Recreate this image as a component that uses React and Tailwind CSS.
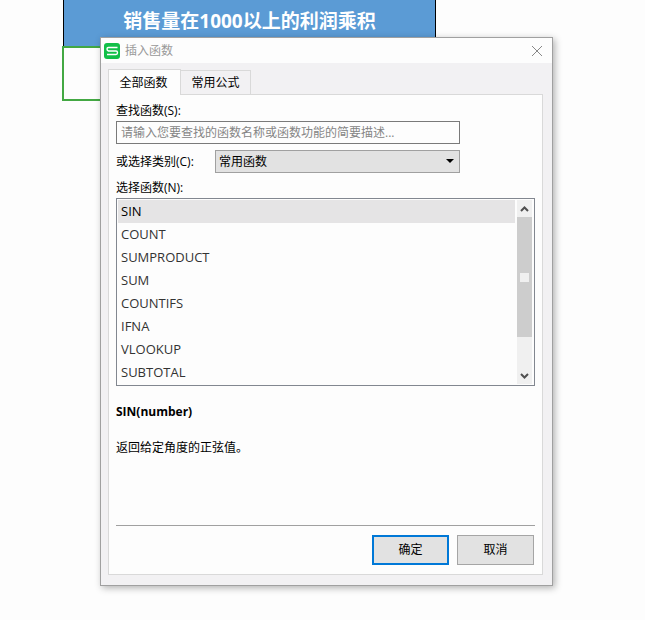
import { useState } from "react";

const functions = ["SIN", "COUNT", "SUMPRODUCT", "SUM", "COUNTIFS", "IFNA", "VLOOKUP", "SUBTOTAL"];

function Sheet() {
  return (
    <div className="ml-[62px] w-[375px]">
      <div className="ml-px flex h-[46px] w-[373px] justify-center border-x border-black bg-[#5b9bd5] pt-1.5 text-[19px] leading-[30px] font-bold text-white">
        销售量在1000以上的利润乘积
      </div>
      <div className="h-[55px] border-2 border-[#43a843]" />
    </div>
  );
}

function TitleBar() {
  return (
    <header className="flex h-[25px] items-center bg-[#fdfdfd] pr-2.5 pl-[3px]">
      <svg viewBox="0 0 16 16" className="size-4" aria-hidden="true">
        <rect width="16" height="16" rx="3" fill="#12bf48" />
        <path d="M13.500 4.500H4.500Q3 4.500 3 6T4.500 8h7.500q1.500 0 1.500 1.750T12 11.500H3" fill="none" stroke="#fff" strokeWidth="1.400" />
      </svg>
      <h1 className="ml-[5px] flex-1 text-[#999]">插入函数</h1>
      <button type="button" aria-label="关闭">
        <svg viewBox="0 0 10 10" className="size-2.5" fill="none" stroke="#888" aria-hidden="true">
          <path d="M0 0l10 10M10 0L0 10" />
        </svg>
      </button>
    </header>
  );
}

function ScrollBar() {
  return (
    <div className="flex w-[15px] flex-col bg-[#f0f0f0]">
      <svg viewBox="0 0 15 17" className="h-[17px]" fill="none" stroke="#505050" strokeWidth="2" aria-hidden="true">
        <path d="M4 11l3.500-3.500L11 11" />
      </svg>
      <div className="flex h-[120px] items-center justify-center bg-[#cdcdcd]">
        <div className="size-[9px] bg-[#f0f0f0]" />
      </div>
      <svg viewBox="0 0 15 17" className="mt-auto h-[17px]" fill="none" stroke="#505050" strokeWidth="2" aria-hidden="true">
        <path d="M4 7l3.500 3.500L11 7" />
      </svg>
    </div>
  );
}

function Dialog() {
  const [selected, setSelected] = useState("SIN");
  return (
    <section
      role="dialog"
      aria-label="插入函数"
      className="absolute top-[37px] left-[100px] w-[453px] border border-[#a0a0a0] bg-[#f2f1f3] text-xs leading-4 text-black shadow-[2px_2px_7px_rgba(0,0,0,0.3)]"
    >
      <TitleBar />
      <div className="pt-1.5 pr-[9px] pb-2.5 pl-[7px]">
        <div role="tablist" className="flex items-end">
          <button type="button" role="tab" aria-selected="true" className="relative -mb-px h-[26px] w-[73px] border border-b-0 border-[#d9d9d9] bg-[#fdfdfd] pr-0.5">
            全部函数
          </button>
          <button type="button" role="tab" aria-selected="false" className="h-6 w-[70px] border border-b-0 border-l-0 border-[#d9d9d9]">
            常用公式
          </button>
        </div>
        <div className="border border-[#d9d9d9] bg-[#fdfdfd] px-[7px] pt-2 pb-[9px]">
          <label htmlFor="search" className="block">查找函数(S):</label>
          <input
            id="search"
            placeholder="请输入您要查找的函数名称或函数功能的简要描述..."
            className="mt-0.5 block h-[23px] w-[344px] border border-[#7a7a7a] px-1 outline-none placeholder:text-[#858585]"
          />
          <div className="mt-1.5 flex h-[23px] w-[344px] items-center">
            <label htmlFor="category" className="w-[99px]">或选择类别(C):</label>
            <div className="relative h-full flex-1">
              <select id="category" className="h-full w-full appearance-none border border-[#a0a0a0] bg-[#e2e2e2] px-[3px]">
                <option>常用函数</option>
              </select>
              <svg viewBox="0 0 8 4" className="pointer-events-none absolute top-[9px] right-1.5 h-1 w-2" aria-hidden="true">
                <path d="M0 0h8L4 4z" />
              </svg>
            </div>
          </div>
          <h2 id="list-label" className="mt-[7px]">选择函数(N):</h2>
          <div className="mt-0.5 flex h-[188px] border border-[#828790] p-px pr-0.5">
            <ul role="listbox" aria-labelledby="list-label" className="mr-0.5 flex-1 text-[13px] leading-[23px] text-[#333]">
              {functions.map((name) => (
                <li
                  key={name}
                  role="option"
                  aria-selected={name === selected}
                  onClick={() => setSelected(name)}
                  className="h-[23px] px-[3px] aria-selected:bg-[#e5e4e5] aria-selected:text-black"
                >
                  {name}
                </li>
              ))}
            </ul>
            <ScrollBar />
          </div>
          <div className="h-[140px] border-b border-[#a0a0a0] pt-[18px]">
            <h3 className="font-bold">SIN(number)</h3>
            <p className="mt-5">返回给定角度的正弦值。</p>
          </div>
          <div className="mt-[9px] flex justify-end gap-2 pr-px">
            <button type="button" className="h-[30px] w-[77px] border-2 border-[#0078d7] bg-[#e2e2e2]">确定</button>
            <button type="button" className="h-[30px] w-[77px] border border-[#a5a5a5] bg-[#e2e2e2]">取消</button>
          </div>
        </div>
      </div>
    </section>
  );
}

export default function App() {
  return (
    <main className="relative min-h-screen bg-[#fdfdfd] font-['Open_Sans','Noto_Sans_CJK_SC',sans-serif]">
      <Sheet />
      <Dialog />
    </main>
  );
}
